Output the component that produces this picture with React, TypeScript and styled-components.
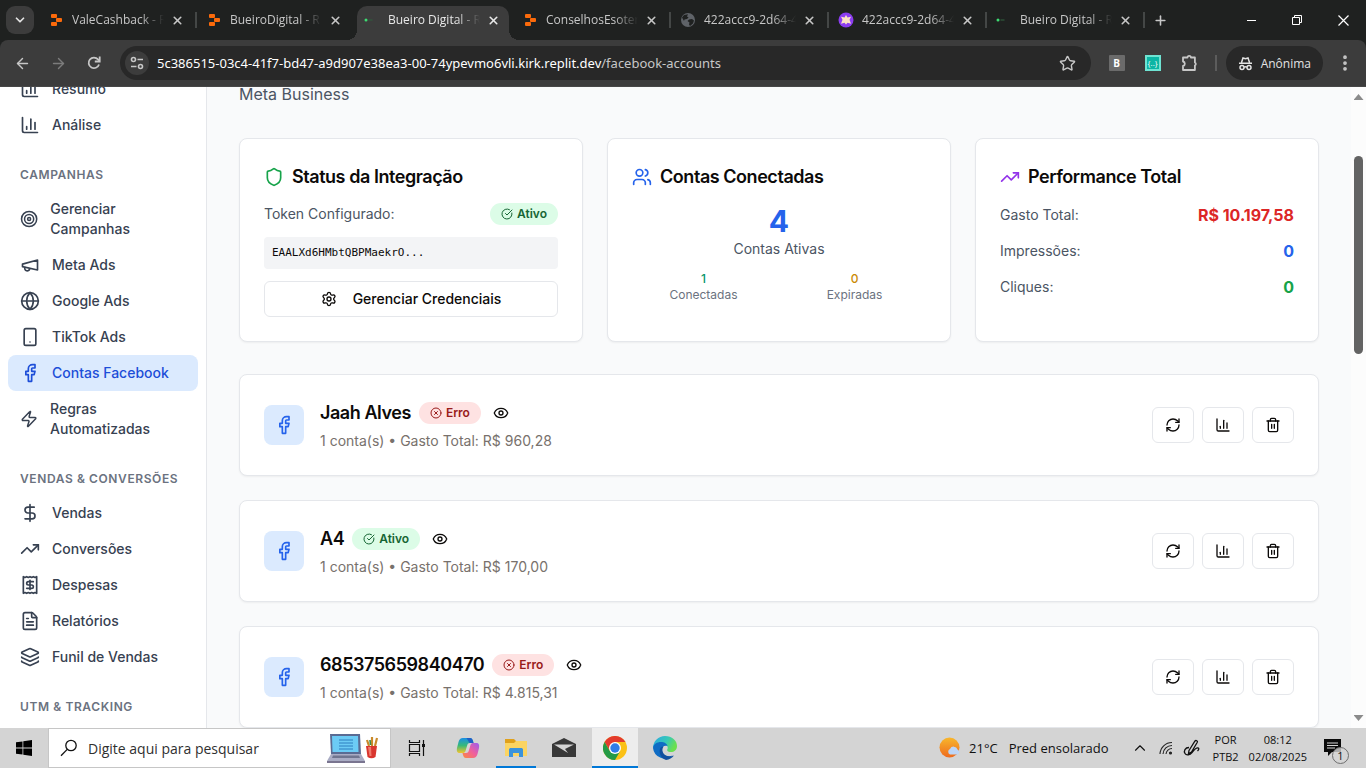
import React from "react";
import styled, { createGlobalStyle } from "styled-components";
import {
  ArrowLeft,
  ArrowRight,
  ChartColumn,
  ChevronDown,
  ChevronUp,
  CircleCheckBig,
  CircleX,
  DollarSign,
  EllipsisVertical,
  Eye,
  Facebook,
  FileText,
  Globe,
  Layers,
  Plus,
  RefreshCw,
  Settings,
  Shield,
  Smartphone,
  Star,
  Target,
  TrendingUp,
  Users,
  X,
  Zap,
} from "lucide-react";

const uiFont = '"Open Sans", "Noto Sans", sans-serif';
const appFont = "Inter, sans-serif";

const GlobalStyle = createGlobalStyle`
  *, *::before, *::after { box-sizing: border-box; }
  body { margin: 0; font-family: ${appFont}; color: #0c0a09; }
  h1, h2, h3, p, ul { margin: 0; padding: 0; }
  ul { list-style: none; }
  button, input { font: inherit; color: inherit; border: 0; background: none; padding: 0; margin: 0; }
  a { color: inherit; text-decoration: none; }
  svg { display: block; }
`;

/* ---------- Shell ---------- */

const Screen = styled.div`
  display: flex;
  flex-direction: column;
  height: 100vh;
  overflow: hidden;
`;

/* ---------- Tab strip ---------- */

const TabStrip = styled.header`
  display: flex;
  flex: none;
  height: 40px;
  padding-left: 6px;
  background: #1f2120;
  color: #c7c7c7;
  font-family: ${uiFont};
  font-size: 12px;
`;

const TabSearch = styled.button`
  display: grid;
  place-items: center;
  width: 28px;
  height: 28px;
  margin: 6px 4px 0 0;
  border-radius: 9px;
  background: #3c3c3c;
  color: #e3e3e3;
`;

const Tab = styled.div<{ $active?: boolean; $divider?: boolean }>`
  position: relative;
  display: flex;
  align-items: center;
  flex: 0 1 158px;
  min-width: 0;
  padding: 0 11px 0 10px;
  color: ${(p) => (p.$active ? "#e8e8e8" : "inherit")};

  &::after {
    content: "";
    position: absolute;
    right: -1px;
    top: 12px;
    width: 2px;
    height: 16px;
    background: ${(p) => (p.$divider ? "#444746" : "transparent")};
  }
`;

const ActiveShape = styled.span`
  position: absolute;
  inset: 6px 3px 0;
  border-radius: 10px 10px 0 0;
  background: #3c3c3c;

  &::before,
  &::after {
    content: "";
    position: absolute;
    bottom: 0;
    width: 10px;
    height: 10px;
  }
  &::before {
    left: -10px;
    background: radial-gradient(circle at 0 0, transparent 10px, #3c3c3c 10px);
  }
  &::after {
    right: -10px;
    background: radial-gradient(circle at 100% 0, transparent 10px, #3c3c3c 10px);
  }
`;

const TabBody = styled.div`
  position: relative;
  display: flex;
  align-items: center;
  flex: 1;
  min-width: 0;
`;

const TabTitle = styled.span`
  flex: 1;
  min-width: 0;
  margin: 0 4px 0 8px;
  overflow: hidden;
  white-space: nowrap;
  line-height: 20px;
  mask-image: linear-gradient(to right, #000 68px, transparent 92px);
`;

const TabClose = styled.button`
  display: grid;
  place-items: center;
  width: 16px;
  height: 16px;
`;

const NewTab = styled.button`
  display: grid;
  place-items: center;
  width: 32px;
`;

const WindowControls = styled.div`
  display: flex;
  margin-left: auto;
`;

const WindowButton = styled.button`
  display: grid;
  place-items: center;
  width: 46px;
  color: #ffffff;
`;

/* ---------- Address toolbar ---------- */

const ToolbarBack = styled.div`
  flex: none;
  background: #1f2120;
`;

const Toolbar = styled.div`
  display: flex;
  align-items: center;
  height: 47px;
  padding: 0 11px;
  border-radius: 8px 8px 0 0;
  border-bottom: 1px solid #474747;
  background: #3c3c3c;
  color: #c7c7c7;
  font-family: ${uiFont};
`;

const NavButton = styled.button<{ $dim?: boolean }>`
  display: grid;
  place-items: center;
  width: 22px;
  height: 28px;
  margin-right: 14px;
  color: ${(p) => (p.$dim ? "#7c7c7c" : "#c7c7c7")};
`;

const Omnibox = styled.div`
  display: flex;
  align-items: center;
  flex: 1;
  min-width: 0;
  height: 34px;
  margin-left: 1px;
  padding: 0 15px 0 5px;
  border-radius: 17px;
  background: #282828;
`;

const SiteInfo = styled.button`
  display: grid;
  place-items: center;
  width: 24px;
  height: 24px;
  margin-right: 8px;
  border-radius: 12px;
  background: #3c3c3c;
`;

const Address = styled.div`
  flex: 1;
  min-width: 0;
  overflow: hidden;
  white-space: nowrap;
  font-family: "Noto Sans", sans-serif;
  font-size: 13px;
  line-height: 20px;
  color: #c7c7c7;
`;

const Host = styled.span`
  color: #ffffff;
`;

const Extensions = styled.div`
  display: flex;
  align-items: center;
  gap: 20px;
  margin: 0 16px 0 18px;
`;

const ExtensionB = styled.button`
  width: 16px;
  height: 16px;
  border-radius: 1px;
  background: #6b6b6b;
  color: #ffffff;
  font-size: 10px;
  font-weight: 700;
  line-height: 16px;
`;

const ExtensionBraces = styled.button`
  width: 16px;
  height: 16px;
  border: 2px solid #6fe3d2;
  background: #0cb5a4;
  color: #ffffff;
  font-size: 8px;
  line-height: 10px;
`;

const ToolbarDivider = styled.span`
  width: 2px;
  height: 16px;
  margin-right: 9px;
  background: #5c5c5c;
`;

const ProfileChip = styled.button`
  display: flex;
  align-items: center;
  gap: 8px;
  height: 34px;
  padding: 0 12px;
  margin-right: 12px;
  border-radius: 17px;
  background: #282828;
  color: #e3e3e3;
  font-size: 12px;
`;

const PlainButton = styled.button`
  display: grid;
  place-items: center;
`;

/* ---------- Page ---------- */

const Page = styled.div`
  display: flex;
  flex: 1;
  min-height: 0;
  background: #f9fafb;
`;

const Sidebar = styled.aside`
  flex: none;
  width: 207px;
  padding: 0 8px;
  overflow: hidden;
  border-right: 1px solid #e5e7eb;
  background: #ffffff;
`;

const SidebarScroll = styled.nav`
  margin-top: -16px;
`;

const SectionTitle = styled.h3`
  margin: 24px 12px 8px;
  font-size: 12px;
  font-weight: 600;
  line-height: 16px;
  letter-spacing: 0.05em;
  color: #6b7280;
  text-transform: uppercase;
`;

const NavLink = styled.a<{ $active?: boolean }>`
  display: flex;
  align-items: center;
  gap: 12px;
  padding: 8px 12px;
  border-radius: 8px;
  font-size: 14px;
  font-weight: 500;
  line-height: 20px;
  background: ${(p) => (p.$active ? "#dbeafe" : "transparent")};
  color: ${(p) => (p.$active ? "#1d4ed8" : "#374151")};
`;

const Main = styled.main`
  flex: 1;
  min-width: 0;
  overflow: hidden;
  padding: 0 32px;
`;

const MainScroll = styled.div`
  margin-top: -5px;
`;

const Intro = styled.p`
  font-size: 16px;
  line-height: 24px;
  color: #4b5563;
`;

const Summary = styled.section`
  display: grid;
  grid-template-columns: repeat(3, 1fr);
  gap: 24px;
  margin: 32px 0;
`;

const Card = styled.article`
  padding: 24px;
  border: 1px solid #e5e7eb;
  border-radius: 8px;
  background: #ffffff;
  box-shadow: 0 1px 2px rgba(0, 0, 0, 0.05);
`;

const CardTitle = styled.h2`
  display: flex;
  align-items: center;
  gap: 8px;
  margin-bottom: 12px;
  font-size: 18px;
  font-weight: 600;
  line-height: 28px;
  letter-spacing: -0.025em;
`;

const Stack = styled.div`
  display: flex;
  flex-direction: column;
  gap: 12px;
`;

const Row = styled.div`
  display: flex;
  align-items: center;
  justify-content: space-between;
`;

const Label = styled.span`
  font-size: 14px;
  line-height: 20px;
  color: #4b5563;
`;

const Metric = styled.strong<{ $color: string }>`
  font-size: 16px;
  font-weight: 700;
  line-height: 24px;
  color: ${(p) => p.$color};
`;

const StatusBadge = styled.span<{ $ok: boolean }>`
  display: inline-flex;
  align-items: center;
  gap: 4px;
  height: 22px;
  padding: 0 11px;
  border-radius: 11px;
  font-size: 12px;
  font-weight: 600;
  line-height: 16px;
  background: ${(p) => (p.$ok ? "#dcfce7" : "#fee2e2")};
  color: ${(p) => (p.$ok ? "#166534" : "#991b1b")};
`;

const Token = styled.code`
  padding: 8px;
  border-radius: 4px;
  background: #f3f4f6;
  font-family: "DejaVu Sans Mono", monospace;
  font-size: 11px;
  line-height: 16px;
`;

const OutlineButton = styled.button`
  display: flex;
  align-items: center;
  justify-content: center;
  gap: 16px;
  height: 36px;
  padding: 0 12px;
  border: 1px solid #e5e7eb;
  border-radius: 6px;
  background: #ffffff;
  font-size: 14px;
  font-weight: 500;
  line-height: 20px;
`;

const Centered = styled.div`
  text-align: center;
`;

const BigNumber = styled.p`
  font-size: 30px;
  font-weight: 700;
  line-height: 36px;
  color: #2563eb;
`;

const Split = styled.div`
  display: grid;
  grid-template-columns: 1fr 1fr;
  gap: 8px;
  text-align: center;
`;

const SmallText = styled.p<{ $color: string; $weight?: number }>`
  font-size: 12px;
  font-weight: ${(p) => p.$weight ?? 400};
  line-height: 16px;
  color: ${(p) => p.$color};
`;

const Accounts = styled.section`
  display: flex;
  flex-direction: column;
  gap: 24px;
`;

const AccountRow = styled.div`
  display: flex;
  align-items: center;
  gap: 16px;
`;

const Avatar = styled.div`
  display: grid;
  place-items: center;
  width: 40px;
  height: 40px;
  border-radius: 8px;
  background: #dbeafe;
  color: #2563eb;
`;

const AccountInfo = styled.div`
  flex: 1;
  min-width: 0;
`;

const AccountHead = styled.div`
  display: flex;
  align-items: center;
  gap: 8px;
  margin-bottom: 4px;
`;

const AccountName = styled.h3`
  font-size: 18px;
  font-weight: 600;
  line-height: 28px;
  letter-spacing: -0.025em;
`;

const EyeButton = styled.button`
  padding: 4px;
`;

const AccountMeta = styled.p`
  font-size: 14px;
  line-height: 20px;
  color: #78716c;
`;

const Actions = styled.div`
  display: flex;
  gap: 8px;
`;

const Scrollbar = styled.div`
  display: flex;
  flex-direction: column;
  align-items: center;
  flex: none;
  width: 15px;
  padding: 7px 0;
  background: #fcfcfc;
`;

const Track = styled.div`
  flex: 1;
  padding-top: 56px;
`;

const Thumb = styled.div`
  width: 9px;
  height: 198px;
  border-radius: 5px;
  background: #636363;
`;

const ScrollArrow = styled.button<{ $down?: boolean }>`
  width: 10px;
  height: 6px;
  background: #8b8b8b;
  clip-path: ${(p) =>
    p.$down ? "polygon(0 0, 100% 0, 50% 100%)" : "polygon(0 100%, 50% 0, 100% 100%)"};
`;

/* ---------- Taskbar ---------- */

const Taskbar = styled.footer`
  display: flex;
  flex: none;
  height: 40px;
  background: #d4d4d4;
  color: #101010;
  font-family: ${uiFont};
  font-size: 14px;
`;

const TaskButton = styled.button<{ $w: number; $open?: boolean; $current?: boolean }>`
  display: grid;
  place-items: center;
  width: ${(p) => p.$w}px;
  background: ${(p) => (p.$current ? "#ededed" : "transparent")};
  box-shadow: ${(p) => (p.$open ? "inset 0 -2px 0 #0078d7" : "none")};
`;

const SearchBox = styled.label`
  display: flex;
  align-items: center;
  width: 343px;
  padding: 0 11px 0 11px;
  margin-right: 4px;
  border: 1px solid #c6c6c6;
  background: #ffffff;
`;

const SearchInput = styled.input`
  flex: 1;
  min-width: 0;
  margin-left: 10px;
  font-size: 14px;
  outline: 0;

  &::placeholder {
    color: #303030;
    opacity: 1;
  }
`;

const TaskIcons = styled.div`
  display: flex;
  gap: 4px;
`;

const Tray = styled.div`
  display: flex;
  align-items: center;
  margin-left: auto;
`;

const Weather = styled.button`
  display: flex;
  align-items: center;
  gap: 7px;
  margin-right: 22px;
  font-size: 13px;
`;

const Forecast = styled.span`
  margin-left: 4px;
`;

const TrayIcons = styled.div`
  display: flex;
  align-items: center;
  gap: 10px;
  margin-right: 12px;
`;

const TwoLines = styled.button`
  margin-right: 10px;
  font-size: 11px;
  line-height: 17px;
`;

const Notifications = styled.button`
  position: relative;
  width: 25px;
  height: 32px;
  margin: 0 17px 0 7px;
  padding-bottom: 1px;
`;

const Count = styled.span`
  position: absolute;
  right: 0;
  bottom: 0;
  width: 17px;
  height: 17px;
  border: 1px solid #6f6f6f;
  border-radius: 9px;
  background: rgba(212, 212, 212, 0.8);
  font-size: 11px;
  line-height: 15px;
`;

/* ---------- Drawings ---------- */

const ReplitMark = () => (
  <svg width="16" height="16" viewBox="0 0 16 16" fill="#fb6a0b">
    <rect x="3" y="2" width="6" height="4" rx="1" />
    <rect x="8" y="6" width="6" height="4" rx="1" />
    <rect x="3" y="10" width="6" height="4" rx="1" />
  </svg>
);

const BueiroMark = () => (
  <svg width="16" height="16" viewBox="0 0 16 16">
    <circle cx="2" cy="8" r="1.5" fill="#3ddc72" />
    <path d="M4.500 8h4" stroke="#2f5b3c" strokeWidth="1.2" />
  </svg>
);

const GlobeMark = () => (
  <svg width="16" height="16" viewBox="0 0 16 16">
    <circle cx="8" cy="8" r="7" fill="#5f6368" />
    <path d="M2 5.500 4 3l4-.8-1 2.300 1.600 1-1.600 1.500-2.500.400-.500 1.600zM9 7.500l3-.500 2 1.500-1 3-3 2.500-1-1.500.500-2L7.500 9z" fill="#1f2120" />
  </svg>
);

const PurpleMark = () => (
  <svg width="16" height="16" viewBox="0 0 16 16">
    <circle cx="8" cy="8" r="7.500" fill="#8b3df0" />
    <path d="m8 3 1.500 2.500 3.500-.8-1.500 3 1.500 4-3.500-1L8 12.500l-1.500-1.800-3.500 1 1.500-4-1.500-3 3.500.8z" fill="#fbe3c4" />
  </svg>
);

const lineIcon = {
  fill: "none",
  stroke: "currentColor",
  strokeWidth: 2,
  strokeLinecap: "round" as const,
  strokeLinejoin: "round" as const,
  viewBox: "0 0 24 24",
};

const MegaphoneIcon = ({ size = 20 }: { size?: number }) => (
  <svg {...lineIcon} width={size} height={size}>
    <path d="m3 11 18-5v12L3 14v-3z" />
    <path d="M11.6 16.8a3 3 0 1 1-5.800-1.600" />
  </svg>
);

const ReceiptIcon = ({ size = 20 }: { size?: number }) => (
  <svg {...lineIcon} width={size} height={size}>
    <path d="M4 2v20l2-1 2 1 2-1 2 1 2-1 2 1 2-1 2 1V2l-2 1-2-1-2 1-2-1-2 1-2-1-2 1Z" />
    <path d="M16 8h-6a2 2 0 1 0 0 4h4a2 2 0 1 1 0 4H8" />
    <path d="M12 17.5v-11" />
  </svg>
);

const TrashIcon = () => (
  <svg {...lineIcon} width="16" height="16">
    <path d="M3 6h18" />
    <path d="M19 6v14c0 1-1 2-2 2H7c-1 0-2-1-2-2V6" />
    <path d="M8 6V4c0-1 1-2 2-2h4c1 0 2 1 2 2v2" />
    <path d="M10 11v6M14 11v6" />
  </svg>
);

const ReloadIcon = () => (
  <svg width="16" height="16" viewBox="0 0 16 16" fill="none" stroke="currentColor" strokeWidth="1.800">
    <path d="M13 9.500A5.300 5.300 0 1 1 12 4.400L13.500 6" />
    <path d="M13.700 1.500v5H8.800" />
  </svg>
);

const TuneIcon = () => (
  <svg width="16" height="16" viewBox="0 0 16 16" fill="none" stroke="currentColor" strokeWidth="1.600">
    <circle cx="4.500" cy="4.500" r="2" />
    <path d="M8.500 4.500H14M2 11.500h5.500" />
    <circle cx="11.500" cy="11.500" r="2" />
  </svg>
);

const PuzzleIcon = () => (
  <svg width="18" height="18" viewBox="0 0 18 18" fill="none" stroke="currentColor" strokeWidth="1.800" strokeLinejoin="round">
    <path d="M2 3.500h4.500a1.700 1.700 0 0 1 3.400 0h4v5a1.700 1.700 0 0 1 0 3v4.500H2v-4a2.300 2.300 0 0 0 0-4.500z" />
  </svg>
);

const IncognitoIcon = () => (
  <svg width="15" height="15" viewBox="0 0 15 15" fill="none" stroke="currentColor" strokeWidth="1.500">
    <path d="M3.500 6.500 5 2l2.500.7L10 2l1.500 4.500M1 7.200h13" />
    <circle cx="4" cy="11.500" r="2" />
    <circle cx="11" cy="11.500" r="2" />
    <path d="M6 11.200q1.500-.8 3 0" />
  </svg>
);

const MinimizeIcon = () => (
  <svg width="11" height="11" viewBox="0 0 11 11" stroke="currentColor">
    <path d="M1 5.500h9" />
  </svg>
);

const RestoreIcon = () => (
  <svg width="11" height="11" viewBox="0 0 11 11" stroke="currentColor" fill="none">
    <path d="M.5 2.500h7v7h-7zM2.500 2V.5h7v7H8" />
  </svg>
);

const CloseIcon = () => (
  <svg width="11" height="11" viewBox="0 0 11 11" stroke="currentColor" strokeWidth="1.200">
    <path d="m.5.5 10 10m0-10-10 10" />
  </svg>
);

const WindowsLogo = () => (
  <svg width="16" height="16" viewBox="0 0 16 16" fill="#000">
    <path d="M0 2.300 6.500 1.400v6.200H0zM7.300 1.300 16 0v7.600H7.300zM0 8.400h6.500v6.200L0 13.700zM7.300 8.400H16V16l-8.700-1.300z" />
  </svg>
);

const SearchGlyph = () => (
  <svg width="18" height="18" viewBox="0 0 18 18" fill="none" stroke="#111" strokeWidth="1.300">
    <circle cx="11" cy="6.500" r="5.200" />
    <path d="M7.200 10.400 1 16.800" />
  </svg>
);

const LaptopArt = () => (
  <svg width="52" height="32" viewBox="0 0 52 32">
    <path d="M3 2h30l1 20H4z" fill="#5a6b93" />
    <path d="M5 4h26l.5 16H5.500z" fill="#6ccbf5" />
    <path d="M12 8h14M12 11h14M12 14h14M12 17h14" stroke="#2c7fc0" />
    <path d="M4 22h30l4 7H0z" fill="#a9acc4" />
    <path d="M6 23.500h26l1 2.500H5z" fill="#70758f" />
    <path d="M0 29h38v2H0z" fill="#7a7590" />
    <path d="m42 14-2-6M45 14V5M48 14l2-8" stroke="#c98a2b" strokeWidth="2.200" />
    <path d="m43.500 13-.5-5" stroke="#3a8a48" strokeWidth="1.600" />
    <path d="M39 14h11l-1.500 11q-4 2.500-8 0z" fill="#d9362f" />
    <path d="M41 15h3l.5 9h-2z" fill="#f07a6c" />
  </svg>
);

const TaskViewIcon = () => (
  <svg width="18" height="16" viewBox="0 0 18 16" fill="none" stroke="#111" strokeWidth="1.200">
    <path d="M1.500 4.500h10v7h-10zM1.500 0v2.500h10V0M1.500 16v-2.500h10V16M15.500 0v16" />
    <path d="M14 4h3v3h-3z" fill="#111" stroke="none" />
  </svg>
);

const CopilotIcon = () => (
  <svg width="24" height="22" viewBox="0 0 24 22">
    <defs>
      <linearGradient id="copA" x1="0" y1="0" x2="0" y2="1">
        <stop offset="0" stopColor="#1a8fe6" />
        <stop offset=".5" stopColor="#37b979" />
        <stop offset="1" stopColor="#f3c52c" />
      </linearGradient>
      <linearGradient id="copB" x1="1" y1="0" x2="0" y2="1">
        <stop offset="0" stopColor="#9a5cf0" />
        <stop offset=".5" stopColor="#f0609c" />
        <stop offset="1" stopColor="#fb8a3c" />
      </linearGradient>
    </defs>
    <path d="M7 1h7c2 0 2.500 1.500 3 3l.5 2H14c-2 0-2.500 1-3 3l-1.500 5c-.5 1.500-1.500 2-3 2H4c-3 0-3.500-2-3-5l1.500-6C3.300 2.500 4.500 1 7 1z" fill="url(#copA)" />
    <path d="M17 21h-7c-2 0-2.500-1.500-3-3l-.500-2H10c2 0 2.500-1 3-3l1.500-5c.5-1.500 1.500-2 3-2H20c3 0 3.500 2 3 5l-1.500 6C20.700 19.500 19.500 21 17 21z" fill="url(#copB)" />
    <path d="M10.500 1H14c2 0 2.500 1.500 3 3l.5 2h-4z" fill="#1f5fc4" />
  </svg>
);

const ExplorerIcon = () => (
  <svg width="22" height="20" viewBox="0 0 22 20">
    <path d="M0 1h9l2 2v3H0z" fill="#e0a11c" />
    <path d="M0 5h9l2-2h11v15H0z" fill="#fbd462" />
    <path d="M4 19v-7.500C4 10.500 5 10 6 10h10c1 0 2 .5 2 1.500V19h-4v-4H8v4z" fill="#3b93dc" />
  </svg>
);

const MailIcon = () => (
  <svg width="24" height="20" viewBox="0 0 24 20">
    <path d="M12 0 24 6v13H0V6z" fill="#383838" />
    <path d="M2 6.500h20L13 11l3 4z" fill="#d4d4d4" />
  </svg>
);

const ChromeIcon = () => (
  <svg width="24" height="24" viewBox="0 0 24 24">
    <circle cx="12" cy="12" r="12" fill="#fbc116" />
    <path d="M1.600 6A12 12 0 0 1 22.400 6H12L7 15z" fill="#e33b2e" />
    <path d="M1.600 6A12 12 0 0 0 12 24l5.200-9L12 17l-5.200-2z" fill="#249a46" />
    <circle cx="12" cy="12" r="6" fill="#fff" />
    <circle cx="12" cy="12" r="4.700" fill="#2f7de9" />
  </svg>
);

const EdgeIcon = () => (
  <svg width="24" height="24" viewBox="0 0 24 24">
    <defs>
      <linearGradient id="edgeTop" x1="0" y1="0" x2="1" y2=".4">
        <stop offset="0" stopColor="#2aa6e6" />
        <stop offset=".6" stopColor="#36c9b6" />
        <stop offset="1" stopColor="#6be04e" />
      </linearGradient>
    </defs>
    <path d="M0 12A12 12 0 0 1 12 0c7 0 12 4.500 12 10 0 4-3 6-6 6-3.500 0-4.500-1.500-3.500-3 1-2-1-5-4.500-5-5 0-9 2-10 4z" fill="url(#edgeTop)" />
    <path d="M0 12c.5-4 4-6 8-6 3 0 6 1.500 6.500 4C10 9 8.500 12 9 15c.8 4 5 6.500 11 4.500A12 12 0 0 1 0 12z" fill="#0f6cc4" />
    <path d="M8 11c-3 4-1 11 5 13 3.500-.3 6-2 8-4.500-6 2.500-11-.5-11.500-4.500-.2-1.500 0-3 1-4.500z" fill="#124f9e" />
  </svg>
);

const WeatherIcon = () => (
  <svg width="23" height="22" viewBox="0 0 23 22">
    <defs>
      <linearGradient id="sun" x1="0" y1="0" x2="0" y2="1">
        <stop offset="0" stopColor="#f8b72c" />
        <stop offset="1" stopColor="#ee6a1e" />
      </linearGradient>
    </defs>
    <circle cx="10.500" cy="10.500" r="10" fill="url(#sun)" />
    <path d="M11 17.500a3 3 0 0 1 0-5.500 4 4 0 0 1 7.500.5 2.700 2.700 0 0 1 0 5z" fill="#bcd5f7" />
  </svg>
);

const WifiIcon = () => (
  <svg width="14" height="14" viewBox="0 0 14 14" fill="none" stroke="#222" strokeWidth="1.100">
    <path d="M1 13A12 12 0 0 1 13 1.500M4 13a9 9 0 0 1 9-8.500M7 13a6 6 0 0 1 6-5.500" />
    <circle cx="11.500" cy="12" r="1" fill="#222" />
  </svg>
);

const PenIcon = () => (
  <svg width="18" height="18" viewBox="0 0 18 18" fill="none" stroke="#111" strokeWidth="1.300">
    <path d="M6 11.500 12 2c1-1.200 3 0 2.300 1.300L8.500 13l-3 1.500zM6 8.500C2 8.500.5 12 2 14.500s5 1.500 7-1 4-5 6-4.500-.500 3-.500 3" />
  </svg>
);

const NoteIcon = () => (
  <svg width="17" height="17" viewBox="0 0 17 17">
    <path d="M0 0h17v13H8l-4 4v-4H0z" fill="#0a0a0a" />
    <path d="M3 4h11M3 6.500h11M3 9h8" stroke="#d4d4d4" />
  </svg>
);

/* ---------- Data ---------- */

const tabs = [
  { title: "ValeCashback - R", Mark: ReplitMark, divider: true },
  { title: "BueiroDigital - R", Mark: ReplitMark },
  { title: "Bueiro Digital - R", Mark: BueiroMark, active: true },
  { title: "ConselhosEsoter", Mark: ReplitMark, divider: true },
  { title: "422accc9-2d64-4", Mark: GlobeMark, divider: true },
  { title: "422accc9-2d64-4", Mark: PurpleMark, divider: true },
  { title: "Bueiro Digital - R", Mark: BueiroMark, divider: true },
];

type IconType = React.ComponentType<{ size?: number }>;
type NavItem = { label: string; Icon: IconType; active?: boolean };

const sections: { title?: string; items: NavItem[] }[] = [
  {
    items: [
      { label: "Resumo", Icon: ChartColumn },
      { label: "Análise", Icon: ChartColumn },
    ],
  },
  {
    title: "Campanhas",
    items: [
      { label: "Gerenciar Campanhas", Icon: Target },
      { label: "Meta Ads", Icon: MegaphoneIcon },
      { label: "Google Ads", Icon: Globe },
      { label: "TikTok Ads", Icon: Smartphone },
      { label: "Contas Facebook", Icon: Facebook, active: true },
      { label: "Regras Automatizadas", Icon: Zap },
    ],
  },
  {
    title: "Vendas & Conversões",
    items: [
      { label: "Vendas", Icon: DollarSign },
      { label: "Conversões", Icon: TrendingUp },
      { label: "Despesas", Icon: ReceiptIcon },
      { label: "Relatórios", Icon: FileText },
      { label: "Funil de Vendas", Icon: Layers },
    ],
  },
  { title: "UTM & Tracking", items: [] },
];

const accounts = [
  { name: "Jaah Alves", ok: false, spent: "R$ 960,28" },
  { name: "A4", ok: true, spent: "R$ 170,00" },
  { name: "685375659840470", ok: false, spent: "R$ 4.815,31" },
];

const Status = ({ ok }: { ok: boolean }) => (
  <StatusBadge $ok={ok}>
    {ok ? <CircleCheckBig size={12} /> : <CircleX size={12} />}
    {ok ? "Ativo" : "Erro"}
  </StatusBadge>
);

export default function App() {
  return (
    <Screen>
      <GlobalStyle />
      <TabStrip>
        <TabSearch aria-label="Pesquisar guias">
          <ChevronDown size={14} strokeWidth={3} />
        </TabSearch>
        {tabs.map(({ title, Mark, active, divider }, i) => (
          <Tab key={i} $active={active} $divider={divider}>
            {active && <ActiveShape />}
            <TabBody>
              <Mark />
              <TabTitle>{title}</TabTitle>
              <TabClose aria-label="Fechar guia">
                <X size={13} strokeWidth={3} />
              </TabClose>
            </TabBody>
          </Tab>
        ))}
        <NewTab aria-label="Nova guia">
          <Plus size={15} strokeWidth={2.5} />
        </NewTab>
        <WindowControls>
          <WindowButton aria-label="Minimizar"><MinimizeIcon /></WindowButton>
          <WindowButton aria-label="Restaurar"><RestoreIcon /></WindowButton>
          <WindowButton aria-label="Fechar"><CloseIcon /></WindowButton>
        </WindowControls>
      </TabStrip>

      <ToolbarBack>
        <Toolbar>
          <NavButton aria-label="Voltar"><ArrowLeft size={17} /></NavButton>
          <NavButton aria-label="Avançar" $dim><ArrowRight size={17} /></NavButton>
          <NavButton aria-label="Recarregar"><ReloadIcon /></NavButton>
          <Omnibox>
            <SiteInfo aria-label="Informações do site"><TuneIcon /></SiteInfo>
            <Address role="textbox" aria-label="Endereço" tabIndex={0}>
              <Host>5c386515-03c4-41f7-bd47-a9d907e38ea3-00-74ypevmo6vli.kirk.replit.dev</Host>/facebook-accounts
            </Address>
            <PlainButton aria-label="Favoritar"><Star size={17} /></PlainButton>
          </Omnibox>
          <Extensions>
            <ExtensionB>B</ExtensionB>
            <ExtensionBraces>{"{..}"}</ExtensionBraces>
            <PlainButton aria-label="Extensões"><PuzzleIcon /></PlainButton>
          </Extensions>
          <ToolbarDivider />
          <ProfileChip><IncognitoIcon />Anônima</ProfileChip>
          <PlainButton aria-label="Menu"><EllipsisVertical size={20} strokeWidth={2.5} /></PlainButton>
        </Toolbar>
      </ToolbarBack>

      <Page>
        <Sidebar>
          <SidebarScroll>
            {sections.map(({ title, items }, i) => (
              <div key={i}>
                {title && <SectionTitle>{title}</SectionTitle>}
                <ul>
                  {items.map(({ label, Icon, active }) => (
                    <li key={label}>
                      <NavLink href="#" $active={active}>
                        <Icon size={20} />
                        <span>{label}</span>
                      </NavLink>
                    </li>
                  ))}
                </ul>
              </div>
            ))}
          </SidebarScroll>
        </Sidebar>

        <Main>
          <MainScroll>
            <Intro>Meta Business</Intro>
            <Summary>
              <Card>
                <CardTitle><Shield size={20} color="#16a34a" />Status da Integração</CardTitle>
                <Stack>
                  <Row><Label>Token Configurado:</Label><Status ok /></Row>
                  <Token>EAALXd6HMbtQBPMaekrO...</Token>
                  <OutlineButton><Settings size={16} />Gerenciar Credenciais</OutlineButton>
                </Stack>
              </Card>
              <Card>
                <CardTitle><Users size={20} color="#2563eb" />Contas Conectadas</CardTitle>
                <Stack>
                  <Centered>
                    <BigNumber>4</BigNumber>
                    <Label as="p">Contas Ativas</Label>
                  </Centered>
                  <Split>
                    <div>
                      <SmallText $color="#059669" $weight={500}>1</SmallText>
                      <SmallText $color="#6b7280">Conectadas</SmallText>
                    </div>
                    <div>
                      <SmallText $color="#ca8a04" $weight={500}>0</SmallText>
                      <SmallText $color="#6b7280">Expiradas</SmallText>
                    </div>
                  </Split>
                </Stack>
              </Card>
              <Card>
                <CardTitle><TrendingUp size={20} color="#9333ea" />Performance Total</CardTitle>
                <Stack>
                  <Row><Label>Gasto Total:</Label><Metric $color="#dc2626">R$ 10.197,58</Metric></Row>
                  <Row><Label>Impressões:</Label><Metric $color="#2563eb">0</Metric></Row>
                  <Row><Label>Cliques:</Label><Metric $color="#16a34a">0</Metric></Row>
                </Stack>
              </Card>
            </Summary>

            <Accounts>
              {accounts.map(({ name, ok, spent }) => (
                <Card key={name}>
                  <AccountRow>
                    <Avatar><Facebook size={20} /></Avatar>
                    <AccountInfo>
                      <AccountHead>
                        <AccountName>{name}</AccountName>
                        <Status ok={ok} />
                        <EyeButton aria-label="Ver token"><Eye size={16} /></EyeButton>
                      </AccountHead>
                      <AccountMeta>1 conta(s) • Gasto Total: {spent}</AccountMeta>
                    </AccountInfo>
                    <Actions>
                      <OutlineButton aria-label="Atualizar"><RefreshCw size={16} /></OutlineButton>
                      <OutlineButton aria-label="Relatório"><ChartColumn size={16} /></OutlineButton>
                      <OutlineButton aria-label="Excluir"><TrashIcon /></OutlineButton>
                    </Actions>
                  </AccountRow>
                </Card>
              ))}
            </Accounts>
          </MainScroll>
        </Main>

        <Scrollbar>
          <ScrollArrow aria-label="Rolar para cima" />
          <Track><Thumb /></Track>
          <ScrollArrow aria-label="Rolar para baixo" $down />
        </Scrollbar>
      </Page>

      <Taskbar>
        <TaskButton $w={48} aria-label="Iniciar"><WindowsLogo /></TaskButton>
        <SearchBox>
          <SearchGlyph />
          <SearchInput type="text" placeholder="Digite aqui para pesquisar" aria-label="Pesquisar" />
          <LaptopArt />
        </SearchBox>
        <TaskIcons>
          <TaskButton $w={44} aria-label="Visão de tarefas"><TaskViewIcon /></TaskButton>
          <TaskButton $w={49} aria-label="Copilot"><CopilotIcon /></TaskButton>
          <TaskButton $w={40} $open aria-label="Explorador de arquivos"><ExplorerIcon /></TaskButton>
          <TaskButton $w={48} aria-label="E-mail"><MailIcon /></TaskButton>
          <TaskButton $w={46} $open $current aria-label="Google Chrome"><ChromeIcon /></TaskButton>
          <TaskButton $w={46} aria-label="Microsoft Edge"><EdgeIcon /></TaskButton>
        </TaskIcons>
        <Tray>
          <Weather><WeatherIcon />21°C<Forecast>Pred ensolarado</Forecast></Weather>
          <TrayIcons>
            <ChevronUp size={18} strokeWidth={1.5} />
            <WifiIcon />
            <PenIcon />
          </TrayIcons>
          <TwoLines>POR<br />PTB2</TwoLines>
          <TwoLines>08:12<br />02/08/2025</TwoLines>
          <Notifications aria-label="Notificações"><NoteIcon /><Count>1</Count></Notifications>
        </Tray>
      </Taskbar>
    </Screen>
  );
}
